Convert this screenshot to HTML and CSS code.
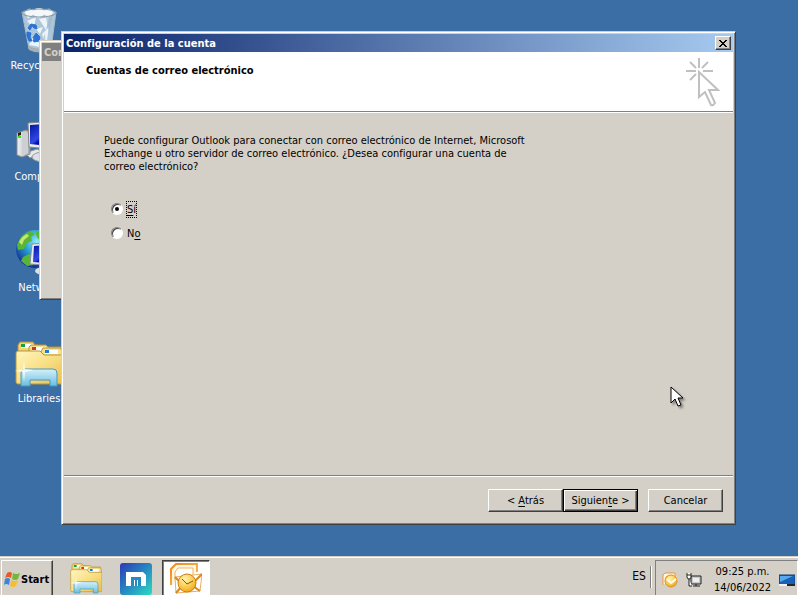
FILE: index.html
```html
<!DOCTYPE html>
<html lang="es">
<head>
<meta charset="utf-8">
<meta name="viewport" content="width=device-width, initial-scale=1">
<title>Configuración de la cuenta</title>
<link rel="stylesheet" href="styles.css">
</head>
<body>
<svg class="defs" aria-hidden="true">
  <defs>
    <linearGradient id="folder" x1="0" y1="0" x2="1" y2="1"><stop offset="0" stop-color="#fff6c0"/><stop offset=".5" stop-color="#f8df85"/><stop offset="1" stop-color="#e9bd4a"/></linearGradient>
    <linearGradient id="stand" x1="0" y1="0" x2="0" y2="1"><stop offset="0" stop-color="#d4f0fa"/><stop offset="1" stop-color="#6bbde0"/></linearGradient>
    <linearGradient id="screen" x1="0" y1="0" x2="1" y2="1"><stop offset="0" stop-color="#0010a0"/><stop offset=".45" stop-color="#3048e0"/><stop offset=".55" stop-color="#0008b0"/><stop offset="1" stop-color="#0000d0"/></linearGradient>
    <linearGradient id="metal" x1="0" y1="0" x2="1" y2="0"><stop offset="0" stop-color="#f4f4f4"/><stop offset="1" stop-color="#a4a8ac"/></linearGradient>
    <radialGradient id="globe" cx=".55" cy=".3" r=".7"><stop offset="0" stop-color="#8feaf8"/><stop offset=".5" stop-color="#269bd0"/><stop offset="1" stop-color="#122c90"/></radialGradient>
    <linearGradient id="maxthon" x1="0" y1="0" x2="1" y2="1"><stop offset="0" stop-color="#2b39b5"/><stop offset=".5" stop-color="#2688c2"/><stop offset="1" stop-color="#2cdcc0"/></linearGradient>
    <radialGradient id="gold" cx=".4" cy=".3" r=".8"><stop offset="0" stop-color="#fff4b0"/><stop offset=".6" stop-color="#fbc544"/><stop offset="1" stop-color="#e89a14"/></radialGradient>
    <linearGradient id="orange" x1="0" y1="0" x2="1" y2="1"><stop offset="0" stop-color="#ee8a1c"/><stop offset="1" stop-color="#fbc460"/></linearGradient>
    <symbol id="libraries" viewBox="0 0 48 48">
      <path d="M3 9V4l2-3h13l2 3h3v20H3z" fill="#f0d576" stroke="#b8902e"/>
      <path d="M6 3h13v4H6z" fill="#fff"/><path d="M6 3h4v3H6z" fill="#12a344"/>
      <path d="M14 10V6l2-2h15l2 2h13v19H14z" fill="#f6df8d" stroke="#b8902e"/>
      <path d="M17 6h14v4H17z" fill="#fff"/><path d="M17 6h4v3h-4z" fill="#d23a12"/>
      <path d="M1 12q0-2 2-2h22l3 3h18q2 0 2 2v26q0 2-2 2H3q-2 0-2-2z" fill="url(#folder)" stroke="#b99436"/>
      <path d="M26 11l2-4h17l2 3v4H29z" fill="#f7e090" stroke="#b99436"/>
      <path d="M30 9h13v4H30z" fill="#fff"/><path d="M30 9h4v3h-4z" fill="#1180d6"/>
      <path d="M6 45V32q0-4 4-4h28q4 0 4 4v13h-7v-6H15v6z" fill="url(#stand)" stroke="#459ac0"/>
      <path d="M9 20l1 8 9 1-9 2-1 10-1-10-8-1 8-2z" fill="#fff" opacity=".8"/>
    </symbol>
  </defs>
</svg>

<main class="desktop">
  <nav class="shortcuts" aria-label="Escritorio">
    <a class="shortcut" href="#recycle">
      <svg viewBox="0 0 48 48" aria-hidden="true">
        <path d="M7 4h34l-5 37q-12 5-22 0z" fill="#b9cfe0" fill-opacity=".9" stroke="#a8bac8"/>
        <path d="M9 4l5-3 5 1 5-3 5 3 5-1 5 3-4 6-6-3-5 4-6-4-5 4z" fill="#f4f8fb" stroke="#b7c8d4"/>
        <path d="M12 13l9-4-2 11zM24 11l10-2-3 13zM14 37l7-13 4 15zM27 26l7-7-3 20zM21 21l7-2-3 7z" fill="#edf4f9"/>
        <path d="M31 10l7-4-4 19zM26 37l4-12 1 14zM13 15l4 6-3 2z" fill="#9fb6c8" opacity=".6"/>
        <ellipse cx="24" cy="5" rx="17" ry="4" fill="none" stroke="#8798a4"/>
        <path d="M13 20l3-4 5 1 1 4-3-1-2-2-2 4zM12 24l4 1-1 4 2 4h-3l-2-5zM18 30l3-5 4 4-1 4-5 1-1-2 2-1z" fill="#2873d4" stroke="#2873d4"/>
        <path d="M13 38q11 5 24 0l-1 4q-11 5-22 0z" fill="#a6b0b4"/>
      </svg>
      <span>Recycle Bin</span>
    </a>
    <a class="shortcut" href="#computer">
      <svg viewBox="0 0 48 48" aria-hidden="true">
        <path d="M10 34l12-4 6 3-13 6z" fill="#e7e8e8" stroke="#8d9192"/>
        <path d="M2 14l9-3 4 2v22l-8 3-5-2z" fill="url(#metal)" stroke="#888d90"/>
        <path d="M7 14v23l6-3V13z" fill="#cdd0d2"/><path d="M3 14l3-1v3l-3 1z" fill="#222"/><path d="M3 17h3v2H3z" fill="#40e020"/>
        <path d="M13 4l32-2v29l-31-3z" fill="#ececec" stroke="#84888a"/><path d="M15 6l28-2v24l-28-3z" fill="url(#screen)"/>
        <path d="M25 30h9v6h-9z" fill="#bec4c8"/><ellipse cx="29" cy="38" rx="12" ry="5" fill="#dce0e2" stroke="#969ca0"/>
      </svg>
      <span>Computer</span>
    </a>
    <a class="shortcut" href="#network">
      <svg viewBox="0 0 48 48" aria-hidden="true">
        <circle cx="20" cy="19" r="19" fill="url(#globe)"/>
        <path d="M2 15Q5 5 15 1l5 3-4 3 1 4-5 2-3 6-6 1zM8 27l6-3 5 4-1 7-6 1-6-5zM20 1l7 1 7 5-3 6-6-2-3-4z" fill="#58b536"/>
        <path d="M4 12q3-6 8-8l2 2-5 4-2 5z" fill="#c8e66c"/>
        <path d="M17 14l29-2v24l-31-2z" fill="#e8eaf0" stroke="#8990a0"/><path d="M19 16l25-2v20l-26-2z" fill="url(#screen)"/>
        <path d="M26 36h7v5h-7z" fill="#c7cdd2"/><ellipse cx="29" cy="41" rx="9" ry="4" fill="#dce0e4"/>
      </svg>
      <span>Network</span>
    </a>
    <a class="shortcut" href="#libraries-folder">
      <svg aria-hidden="true"><use href="#libraries"/></svg>
      <span>Libraries</span>
    </a>
  </nav>

  <section class="window window-back" aria-hidden="true">
    <div class="titlebar titlebar-inactive">Con</div>
  </section>

  <section class="window dialog" role="dialog" aria-labelledby="dialog-title">
    <div class="titlebar">
      <h1 id="dialog-title">Configuración de la cuenta</h1>
      <button class="close" type="button" aria-label="Cerrar">
        <svg viewBox="0 0 8 7" shape-rendering="crispEdges" aria-hidden="true"><path d="M0 0h2v1h1v1h2V1h1V0h2v1H7v1H6v1H5v1h1v1h1v1h1v1H6V6H5V5H3v1H2v1H0V6h1V5h1V4h1V3H2V2H1V1H0z"/></svg>
      </button>
    </div>
    <header class="banner">
      <h2>Cuentas de correo electrónico</h2>
      <svg class="wizard" viewBox="0 0 34 50" fill="none" stroke="#c0c0c0" stroke-width="2" aria-hidden="true">
        <path d="M13 0v10M0 13h10M17 13h10M4 4l6 6M22 4l-6 6M4 22l6-6"/>
        <path d="M13 14v25l6-5 6 13q2 1 4-2l-6-13h9z"/>
      </svg>
    </header>
    <form class="wizard-form">
      <div class="content">
        <p id="question">Puede configurar Outlook para conectar con correo electrónico de Internet, Microsoft Exchange u otro servidor de correo electrónico. ¿Desea configurar una cuenta de correo electrónico?</p>
        <div class="choices" role="radiogroup" aria-labelledby="question">
          <label><input type="radio" name="account" value="yes" checked><span class="focused"><u>S</u>í</span></label>
          <label><input type="radio" name="account" value="no"><span>N<u>o</u></span></label>
        </div>
      </div>
      <footer class="actions">
        <button class="button" type="button">&lt; <u>A</u>trás</button>
        <button class="button button-default" type="submit">Siguien<u>t</u>e &gt;</button>
        <button class="button button-cancel" type="button">Cancelar</button>
      </footer>
    </form>
  </section>

  <svg class="cursor" viewBox="0 0 14 22" aria-hidden="true"><path d="M1 1v16l4-4 3 7 3-1-3-7h5z" fill="#fff" stroke="#000"/></svg>
</main>

<footer class="taskbar">
  <button class="start" type="button">
    <svg viewBox="0 0 16 16" aria-hidden="true">
      <path d="M3 2q3-2 5 0L7 7Q4 5 1 7z" fill="#e85a25"/><path d="M9 2q3 2 7 0l-2 6q-3 2-6 0z" fill="#75b73b"/><path d="M1 8q3-2 5 0l-1 6q-3-2-5 0z" fill="#3f83d5"/><path d="M7 9q3 2 7 0l-2 6q-3 2-6 0z" fill="#f6be2e"/>
    </svg>
    Start
  </button>
  <div class="tasks">
    <button class="task" type="button" aria-label="Libraries"><svg aria-hidden="true"><use href="#libraries"/></svg></button>
    <button class="task" type="button" aria-label="Maxthon">
      <svg viewBox="0 0 32 32" aria-hidden="true"><rect width="32" height="32" rx="3" fill="url(#maxthon)"/><path d="M6 9h17l3 3v11H6z" fill="#fff"/><path d="M11 14h10v9h-3v-6h-1v6h-2v-6h-1v6h-3z" fill="#278bc2"/></svg>
    </button>
    <button class="task task-active" type="button" aria-label="Outlook">
      <svg viewBox="0 0 32 32" aria-hidden="true">
        <path d="M1 22V6l5-5h21v8" fill="#fff6e4" stroke="url(#orange)" stroke-width="2"/><path d="M5 17V9l3-4h15v7" fill="#fff" stroke="#f6b35a"/>
        <path d="M5 14l27-3-2 17-24 2z" fill="#fff" stroke="#e7b060"/><path d="M5 14l5 5M32 11l-7 7M6 30l6-7M30 28l-7-5" fill="none" stroke="#da861d" stroke-width="2"/>
        <circle cx="17" cy="20" r="9" fill="url(#gold)" stroke="#c88112"/><path d="M12 16l5 5 6-3" fill="none" stroke="#8a5710"/>
      </svg>
    </button>
  </div>
  <span class="language">ES</span>
  <div class="tray">
    <svg viewBox="0 0 16 16" aria-hidden="true"><path d="M1 13V3l2-2h10v5M4 12V5l2-1h5" fill="#fff4df" stroke="#e99739"/><circle cx="9" cy="9" r="6" fill="url(#gold)" stroke="#dc9226"/><path d="M5 7l4 4 5-4" fill="none" stroke="#fff" stroke-width="2"/></svg>
    <svg viewBox="0 0 16 16" aria-hidden="true"><path d="M5 4h10v8H5z" fill="#c8c8c8" stroke="#222"/><path d="M7 6h6v4H7z" fill="#eee"/><path d="M7 14h7M10 12v2" stroke="#222"/><path d="M1 1v4q0 2 2 2t2-2V1M1 3h4M3 7v7h3" fill="#fff" stroke="#222"/></svg>
    <time datetime="2022-06-14T21:25">09:25 p.m.<br>14/06/2022</time>
    <svg class="show-desktop" viewBox="0 0 16 16" aria-hidden="true"><path d="M0 3h16v10H0z" fill="#1860b8" stroke="#123c78"/><path d="M1 4h13L1 10z" fill="#57a8ec"/><path d="M0 12h8v2H0z" fill="#f1f1f1"/><path d="M8 12h8v2H8z" fill="#202830"/></svg>
  </div>
</footer>
</body>
</html>
```
FILE: styles.css
```css
:root {
  --face: #d4d0c8;
  --shadow: #808080;
  --dark: #404040;
}

* { box-sizing: border-box; }

body {
  display: flex;
  flex-direction: column;
  height: 100vh;
  margin: 0;
  overflow: hidden;
  background: #3a6ea5;
  color: #000;
  font: 11px/13px "DejaVu Sans Condensed", "DejaVu Sans", sans-serif;
}

h1, h2, p { margin: 0; font-size: inherit; }
button { padding: 0; font: inherit; color: inherit; }
u { text-underline-offset: 2px; }
svg { display: block; flex: none; }
.defs { position: absolute; width: 0; height: 0; }

.desktop { position: relative; flex: 1; min-height: 0; }

.shortcuts {
  display: flex;
  flex-direction: column;
  gap: 40px;
  width: 78px;
  padding-top: 8px;
}

.shortcut {
  display: flex;
  flex-direction: column;
  align-items: center;
  gap: 3px;
  height: 71px;
  color: #fff;
  text-decoration: none;
  white-space: nowrap;
}
.shortcut svg { width: 48px; height: 48px; }

.window {
  position: absolute;
  display: flex;
  flex-direction: column;
  padding: 2px;
  background: var(--face);
  border: 1px solid;
  border-color: var(--face) var(--dark) var(--dark) var(--face);
  box-shadow: inset 1px 1px #fff, inset -1px -1px var(--shadow);
}

.window-back { top: 40px; left: 39px; width: 200px; height: 260px; }
.dialog { top: 31px; right: 62px; bottom: 31px; left: 61px; }

.titlebar {
  display: flex;
  align-items: center;
  justify-content: space-between;
  height: 18px;
  padding: 0 2px;
  background: linear-gradient(to right, #0a246a, #a6caf0);
  color: #fff;
  font-weight: bold;
}
.titlebar-inactive { background: #808080; color: var(--face); }

.close {
  display: grid;
  place-items: center;
  width: 16px;
  height: 14px;
  background: var(--face);
  border: 1px solid;
  border-color: #fff var(--dark) var(--dark) #fff;
  box-shadow: inset -1px -1px var(--shadow);
}
.close svg { width: 8px; height: 7px; }

.banner {
  display: flex;
  justify-content: space-between;
  height: 60px;
  padding: 6px 13px 0 22px;
  background: #fff;
  border-bottom: 1px solid var(--shadow);
}
.banner h2 { padding-top: 6px; }
.wizard { width: 34px; height: 50px; }

.wizard-form {
  display: flex;
  flex: 1;
  flex-direction: column;
  border-top: 1px solid #fff;
}

.content { flex: 1; padding: 21px 40px; }
.content p { max-width: 424px; }

.choices {
  display: flex;
  flex-direction: column;
  align-items: flex-start;
  gap: 8px;
  padding: 28px 0 0 7px;
}
.choices label { display: flex; align-items: center; gap: 3px; height: 16px; }
.choices span { padding: 1px 0; border: 1px solid transparent; }
.choices .focused { border: 1px dotted #000; }

.choices input {
  display: grid;
  place-items: center;
  width: 12px;
  height: 12px;
  margin: 0;
  appearance: none;
  background: #fff;
  border: 1px solid;
  border-color: var(--shadow) #fff #fff var(--shadow);
  border-radius: 50%;
  box-shadow: inset 1px 1px var(--dark);
}
.choices input:checked::before {
  content: "";
  width: 4px;
  height: 4px;
  background: #000;
  border-radius: 50%;
}

.actions {
  display: flex;
  justify-content: flex-end;
  height: 47px;
  padding: 13px 10px 0;
  border-top: 1px solid var(--shadow);
  box-shadow: inset 0 1px #fff;
}

.button {
  width: 75px;
  height: 23px;
  background: var(--face);
  border: 1px solid;
  border-color: #fff var(--dark) var(--dark) #fff;
  box-shadow: inset -1px -1px var(--shadow);
}
.button-default {
  border-color: #000;
  box-shadow: inset 1px 1px #fff, inset -1px -1px var(--dark), inset -2px -2px var(--shadow);
}
.button-cancel { margin-left: 10px; }

.cursor {
  position: absolute;
  top: 386px;
  left: 670px;
  width: 14px;
  height: 22px;
  filter: drop-shadow(2px 2px 1px #0006);
}

.taskbar {
  display: flex;
  flex: none;
  height: 39px;
  padding-top: 4px;
  background: var(--face);
  box-shadow: inset 0 1px var(--face), inset 0 2px #fff;
  overflow: hidden;
}

.start {
  display: flex;
  align-items: center;
  gap: 1px;
  width: 52px;
  height: 38px;
  margin-left: 1px;
  padding-left: 2px;
  background: var(--face);
  border: 1px solid;
  border-color: #fff var(--dark) var(--dark) #fff;
  box-shadow: inset -1px -1px var(--shadow);
  font-weight: bold;
}
.start svg { width: 16px; height: 16px; }

.tasks { display: flex; flex: 1; gap: 2px; padding-left: 9px; }
.task {
  display: grid;
  place-items: center;
  width: 48px;
  height: 38px;
  background: none;
  border: 0;
}
.task svg { width: 32px; height: 32px; }
.task-active {
  background: #fff;
  border: 1px solid;
  border-color: var(--dark) #fff #fff var(--dark);
  box-shadow: inset 1px 1px var(--shadow);
}

.language {
  height: 22px;
  margin-top: 6px;
  padding: 4px 4px 0 0;
  border-right: 1px solid var(--shadow);
  box-shadow: 1px 0 #fff;
  font-size: 12px;
}

.tray {
  display: flex;
  align-items: center;
  gap: 8px;
  height: 40px;
  margin-left: 4px;
  padding: 0 2px 0 6px;
  border: 1px solid;
  border-color: var(--shadow) #fff #fff var(--shadow);
}
.tray svg { width: 16px; height: 16px; }
.tray time { margin-left: 4px; line-height: 16px; text-align: center; }
```
